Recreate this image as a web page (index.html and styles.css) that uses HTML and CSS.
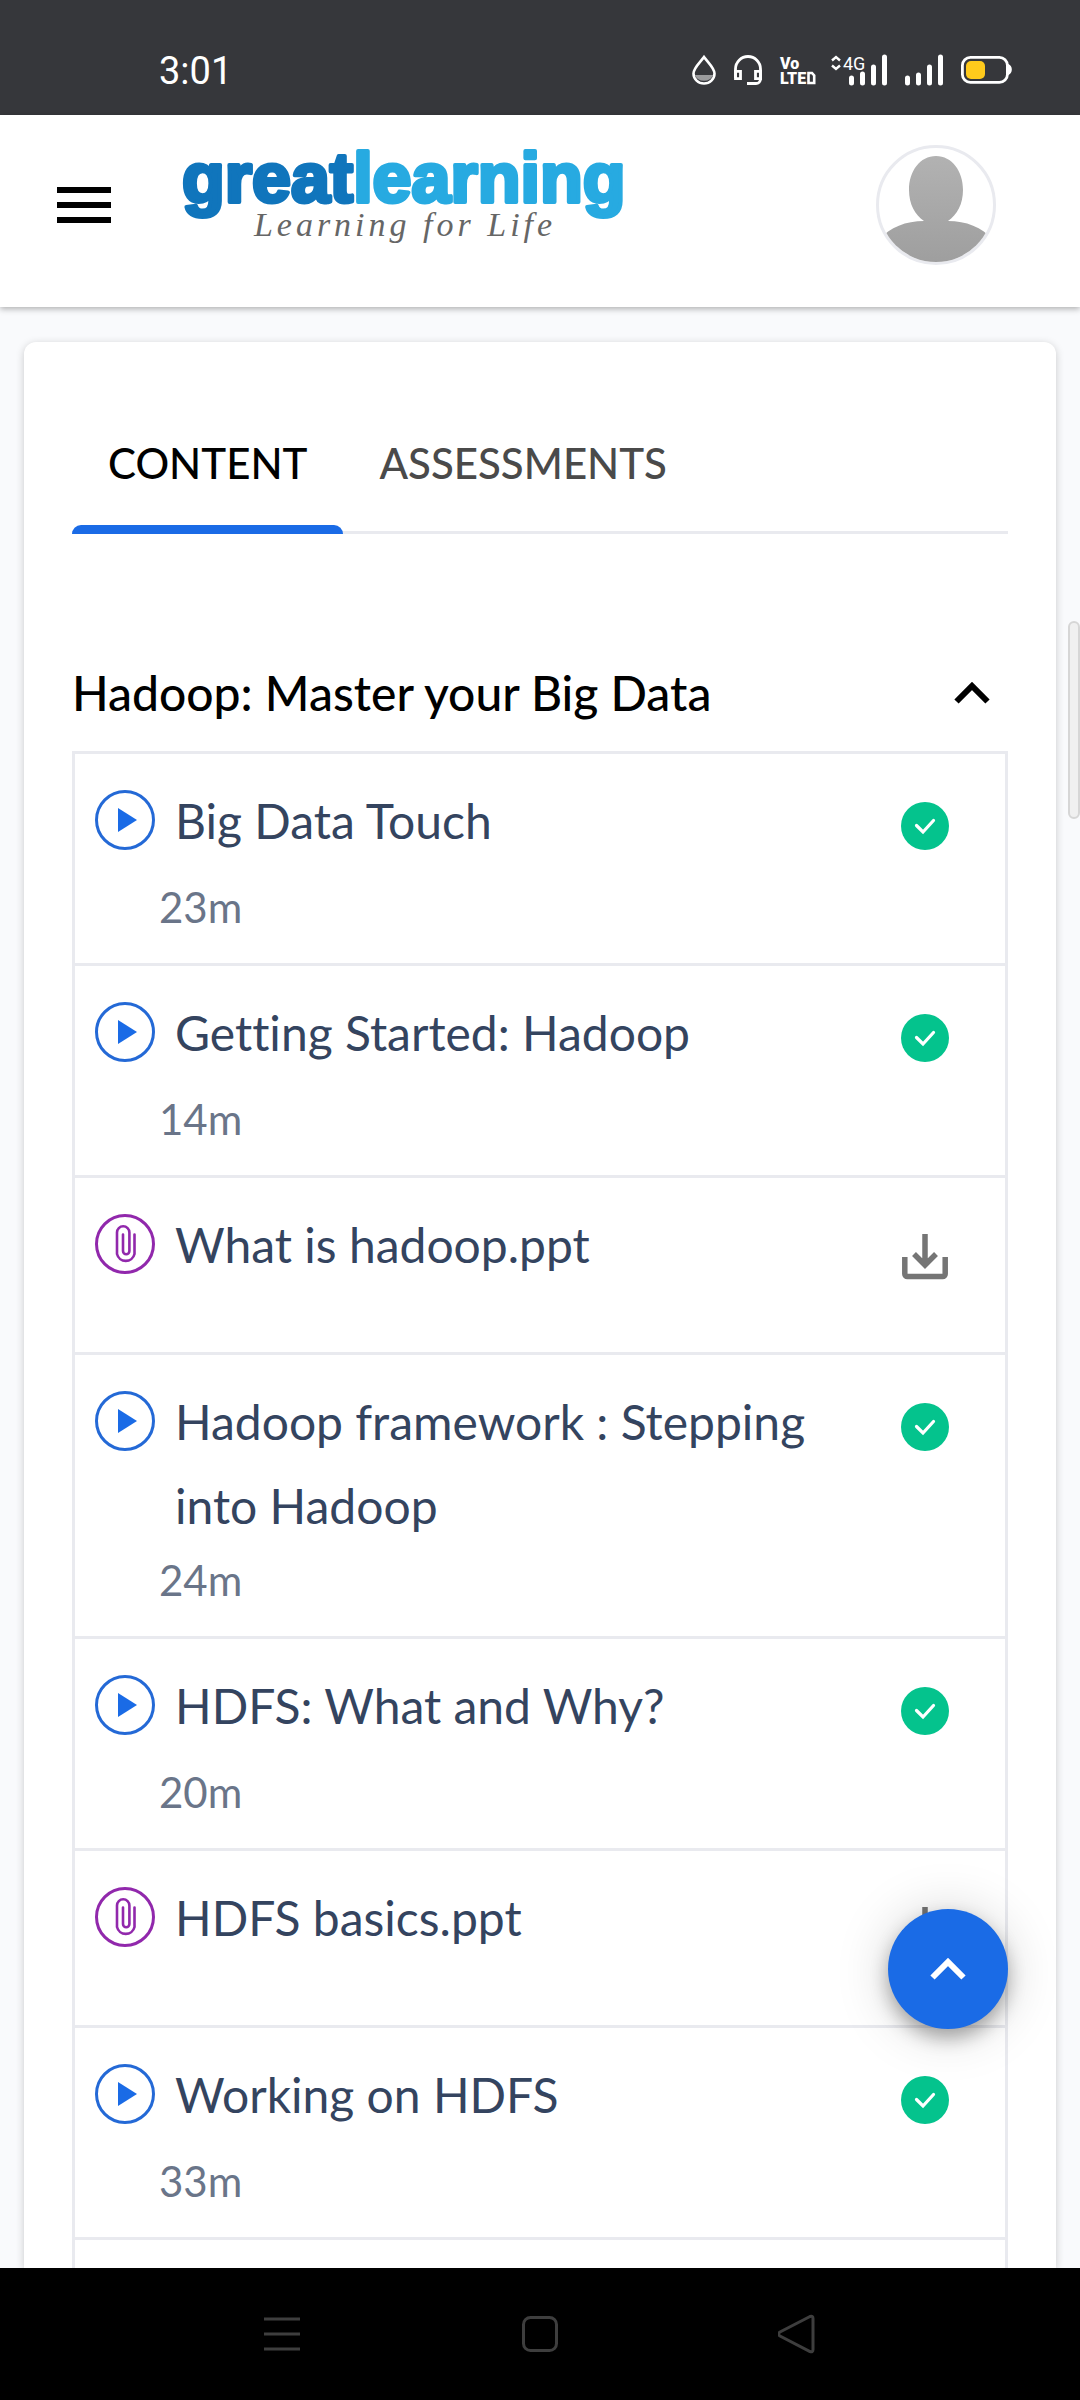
FILE: index.html
```html
<!DOCTYPE html>
<html lang="en">
<head>
<meta charset="utf-8">
<meta name="viewport" content="width=device-width, initial-scale=1">
<title>Great Learning</title>
<link rel="stylesheet" href="styles.css">
</head>
<body>
<svg class="sprite" aria-hidden="true">
  <symbol id="play" viewBox="0 0 60 60">
    <circle cx="30" cy="30" r="28.5" fill="none" stroke="#2469d6" stroke-width="3"/>
    <path d="M23 18v24l19-12z" fill="#1a6be6"/>
  </symbol>
  <symbol id="clip" viewBox="0 0 60 60">
    <g fill="none" stroke="#9128ac" stroke-width="3">
      <circle cx="30" cy="30" r="28.5"/>
      <path stroke-width="2.6" stroke-linecap="round" d="M39.5 20.500v19.500a9 9 0 0 1-17.500 0V18.500a6.200 6.200 0 0 1 12.400 0v18.500a3.200 3.200 0 0 1-6.400 0V20.500"/>
    </g>
  </symbol>
  <symbol id="check" viewBox="0 0 48 48">
    <circle cx="24" cy="24" r="24" fill="#04c38d"/>
    <path d="M15.500 23.500l6.500 6.500L32.500 18.500" fill="none" stroke="#fff" stroke-width="3.200" stroke-linecap="round"/>
  </symbol>
  <symbol id="download" viewBox="0 0 48 48">
    <g fill="none" stroke="#757575" stroke-width="5.500">
      <path d="M3.800 25v17a2.500 2.500 0 0 0 2.500 2.500h35.400a2.500 2.500 0 0 0 2.500-2.500V25"/>
      <path d="M24 2v30M13 22l11 11 11-11"/>
    </g>
  </symbol>
  <symbol id="chevron" viewBox="0 0 36 22">
    <path d="M2.500 19.500L18 4l15.500 15.500" fill="none" stroke="currentColor" stroke-width="6"/>
  </symbol>
</svg>

<div class="screen">
  <div class="status">
    <span class="clock">3:01</span>
    <div class="status-icons">
      <svg width="24" height="30" viewBox="0 0 24 30"><path d="M3 20a9.500 8.500 0 0 0 18 0z" fill="#9b9b9d"/><path d="M12 2C8 7.500 1.500 13 1.500 18.500a10.500 10 0 0 0 21 0C22.500 13 16 7.500 12 2z" fill="none" stroke="#fff" stroke-width="2.600"/></svg>
      <svg width="28" height="30" viewBox="0 0 28 30"><g fill="none" stroke="#fff" stroke-width="2.800"><path d="M1.500 23V14a12.500 12.500 0 0 1 25 0v10a4.500 4.500 0 0 1-4.500 4.500h-9"/><path d="M1.500 16.400h5v7.200h-5zM21.500 16.400h5v7.200h-5z"/></g></svg>
      <svg class="volte" width="33" height="30" viewBox="0 0 33 30"><text x="0" y="14">Vo</text><text x="0" y="29">LTE</text><path d="M28.500 18H32l2.200 2.500v7.500h-5.700z" fill="none" stroke="#fff" stroke-width="2.600"/></svg>
      <svg class="network" width="56" height="30" viewBox="0 0 56 30"><path d="M1 5.500l4-3.500 4 3.500M1 10.500l4 3.500 4-3.500" fill="none" stroke="#fff" stroke-width="2.400"/><text x="12" y="15">4G</text><path d="M20.500 23v5M31.500 19v9M42.500 12v16M53.500 2v26" stroke="#fff" stroke-width="5" stroke-linecap="round"/></svg>
      <svg width="38" height="30" viewBox="0 0 38 30"><path d="M2.500 23v5M13.500 20v8M24.500 12v16M35.500 2v26" stroke="#fff" stroke-width="5" stroke-linecap="round"/></svg>
      <svg width="50" height="30" viewBox="0 0 50 30"><rect x="1.400" y="2.400" width="45" height="25" rx="8" fill="none" stroke="#fff" stroke-width="2.800"/><path d="M47 10a5 5 0 0 1 0 9z" fill="#fff" stroke="#fff" stroke-width="2"/><rect x="5" y="6" width="19" height="18" rx="5" fill="#ffca1c"/></svg>
    </div>
  </div>

  <header class="header">
    <button class="menu" aria-label="Menu"><span></span><span></span><span></span></button>
    <a class="logo" href="#" aria-label="Great Learning home">
      <svg class="wordmark" width="448" height="62" viewBox="0 0 448 62"><text x="1" y="49"><tspan class="dark">great</tspan><tspan class="light">learning</tspan></text></svg>
      <span class="tagline">Learning for Life</span>
    </a>
    <button class="avatar" aria-label="Profile">
      <svg viewBox="0 -2 114 114">
        <defs><linearGradient id="shade" x1="0" y1="0" x2="0" y2="1"><stop offset="0" stop-color="#b2b2b2"/><stop offset="1" stop-color="#9d9d9d"/></linearGradient></defs>
        <path fill="url(#shade)" d="M57 6C73 6 84 21 84 40c0 14-6 25-15 31 18 0 34 6 45 19v30H0V90c11-13 27-19 45-19-9-6-15-17-15-31C30 21 41 6 57 6z"/>
      </svg>
    </button>
  </header>

  <main class="main">
    <section class="card">
      <div class="tabs" role="tablist">
        <button class="tab active" role="tab" aria-selected="true">CONTENT</button>
        <button class="tab" role="tab" aria-selected="false">ASSESSMENTS</button>
      </div>
      <button class="module" aria-expanded="true">
        <span>Hadoop: Master your Big Data</span>
        <svg class="chevron"><use href="#chevron"/></svg>
      </button>
      <ul class="lessons">
        <li class="lesson">
          <svg class="kind"><use href="#play"/></svg>
          <a class="title" href="#">Big Data Touch</a>
          <svg class="state"><use href="#check"/></svg>
          <span class="time">23m</span>
        </li>
        <li class="lesson">
          <svg class="kind"><use href="#play"/></svg>
          <a class="title" href="#">Getting Started: Hadoop</a>
          <svg class="state"><use href="#check"/></svg>
          <span class="time">14m</span>
        </li>
        <li class="lesson file">
          <svg class="kind"><use href="#clip"/></svg>
          <a class="title" href="#">What is hadoop.ppt</a>
          <button class="download" aria-label="Download"><svg><use href="#download"/></svg></button>
        </li>
        <li class="lesson">
          <svg class="kind"><use href="#play"/></svg>
          <a class="title" href="#">Hadoop framework : Stepping into Hadoop</a>
          <svg class="state"><use href="#check"/></svg>
          <span class="time">24m</span>
        </li>
        <li class="lesson">
          <svg class="kind"><use href="#play"/></svg>
          <a class="title" href="#">HDFS: What and Why?</a>
          <svg class="state"><use href="#check"/></svg>
          <span class="time">20m</span>
        </li>
        <li class="lesson file">
          <svg class="kind"><use href="#clip"/></svg>
          <a class="title" href="#">HDFS basics.ppt</a>
          <button class="download" aria-label="Download"><svg><use href="#download"/></svg></button>
        </li>
        <li class="lesson">
          <svg class="kind"><use href="#play"/></svg>
          <a class="title" href="#">Working on HDFS</a>
          <svg class="state"><use href="#check"/></svg>
          <span class="time">33m</span>
        </li>
      </ul>
    </section>
    <div class="scrollbar"></div>
    <button class="to-top" aria-label="Back to top"><svg class="chevron"><use href="#chevron"/></svg></button>
  </main>

  <nav class="system-nav">
    <button aria-label="Recent apps"><svg viewBox="0 0 40 40"><path d="M2 5h36M2 20h36M2 35h36" stroke="#3e3e3e" stroke-width="3"/></svg></button>
    <button aria-label="Home"><svg viewBox="0 0 40 40"><rect x="3.500" y="3.500" width="33" height="33" rx="7" fill="none" stroke="#3e3e3e" stroke-width="3"/></svg></button>
    <button aria-label="Back"><svg viewBox="0 0 40 40"><path d="M32 2.500L2 18q-3 2 0 4l30 15.500q3 1 3-2v-31q0-3-3-2z" fill="none" stroke="#3e3e3e" stroke-width="3"/></svg></button>
  </nav>
</div>
</body>
</html>
```

FILE: styles.css
```css
* { box-sizing: border-box; }

body {
  margin: 0;
  font-family: Lato, sans-serif;
  font-variant-ligatures: none;
  background: #f9fafc;
}

button {
  margin: 0;
  padding: 0;
  border: 0;
  background: none;
  color: inherit;
  font: inherit;
}

a { color: inherit; text-decoration: none; }
svg { display: block; flex: none; }
.sprite { position: absolute; width: 0; height: 0; }

.screen {
  display: flex;
  flex-direction: column;
  height: 100vh;
  overflow: hidden;
}

/* System status bar */
.status {
  flex: none;
  display: flex;
  justify-content: space-between;
  align-items: center;
  height: 115px;
  padding: 24px 69px 0 159px;
  background: #36373b;
  color: #fff;
}
.clock { padding-top: 2px; font: 38px/48px Roboto, sans-serif; }
.status-icons { display: flex; align-items: center; gap: 18px; }
.status-icons svg { overflow: visible; }
.status-icons text { fill: #fff; font-family: Roboto, sans-serif; }
.volte text { font-size: 16px; font-weight: 900; }
.network text { font-size: 18px; }

/* App header */
.header {
  position: relative;
  z-index: 1;
  flex: none;
  display: flex;
  align-items: flex-start;
  height: 192px;
  padding: 30px 84px 0 57px;
  background: #fff;
  box-shadow: 0 2px 6px rgba(0, 0, 0, 0.3);
}
.menu {
  display: flex;
  flex-direction: column;
  gap: 9px;
  width: 54px;
  margin-top: 42px;
}
.menu span { height: 6px; background: #000; }
.logo {
  display: flex;
  flex-direction: column;
  align-items: center;
  margin-left: 70px;
}
.wordmark { overflow: visible; margin-top: 8px; }
.wordmark text {
  font: bold 70px "Liberation Sans", sans-serif;
  stroke-width: 4px;
  stroke-linejoin: round;
}
.dark { fill: #1075bc; stroke: #1075bc; }
.light { fill: #27aae1; stroke: #27aae1; }
.tagline {
  margin-top: -9px;
  color: #666;
  font: italic 34px/38px "Liberation Serif", serif;
  letter-spacing: 4px;
}
.avatar {
  width: 120px;
  height: 120px;
  margin-left: auto;
  overflow: hidden;
  border: 3px solid #e9eaef;
  border-radius: 50%;
}

/* Course content */
.main {
  position: relative;
  flex: 1;
  min-height: 0;
  overflow: hidden;
  padding: 35px 24px 0;
}
.card {
  display: flex;
  flex-direction: column;
  min-height: 100%;
  padding: 72px 48px 0;
  border-radius: 12px 12px 0 0;
  background: #fff;
  box-shadow: 0 2px 9px rgba(0, 0, 0, 0.2);
}
.tabs {
  flex: none;
  display: flex;
  border-bottom: 3px solid #e9eaef;
}
.tab {
  position: relative;
  height: 117px;
  padding: 0 36px 20px;
  color: #4a4a4a;
  font-size: 42px;
  font-weight: 500;
}
.tab.active { color: #000; }
.tab.active::after {
  content: "";
  position: absolute;
  inset: auto 0 -3px;
  height: 9px;
  border-radius: 9px 9px 0 0;
  background: #1a6be6;
}
.module {
  flex: none;
  display: flex;
  justify-content: space-between;
  align-items: center;
  margin-top: 100px;
  padding: 23px 18px 22px 0;
  font-size: 48px;
  font-weight: 500;
  line-height: 72px;
}
.chevron { width: 36px; height: 22px; }

.lessons {
  flex: 1 0 auto;
  margin: 0;
  padding: 0;
  list-style: none;
  border: solid #e9eaef;
  border-width: 3px 3px 0;
}
.lesson {
  display: grid;
  grid-template-columns: 60px 1fr 48px;
  grid-template-rows: minmax(96px, auto) 65px;
  column-gap: 20px;
  align-items: start;
  padding: 25px 56px 23px 20px;
  border-bottom: 3px solid #e9eaef;
}
.lesson.file { grid-template-rows: 126px; }
.kind { width: 60px; height: 60px; margin-top: 11px; }
.title { color: #34445f; font-size: 48px; line-height: 84px; }
.state { width: 48px; height: 48px; margin-top: 23px; }
.download { margin-top: 29px; }
.download svg { width: 48px; height: 48px; }
.time {
  grid-column: 1 / -1;
  padding-left: 64px;
  color: #6a7589;
  font-size: 42px;
  line-height: 65px;
}

.scrollbar {
  position: absolute;
  top: 314px;
  right: 0;
  width: 12px;
  height: 198px;
  border: 2px solid #d6d6d6;
  border-radius: 6px;
  background: #f0f0f0;
}
.to-top {
  position: absolute;
  right: 72px;
  bottom: 239px;
  display: grid;
  place-items: center;
  width: 120px;
  height: 120px;
  border-radius: 50%;
  background: #1a6be6;
  color: #fff;
  box-shadow: 0 9px 18px rgba(0, 0, 0, 0.3), 0 3px 54px rgba(0, 0, 0, 0.18);
}

/* System navigation bar */
.system-nav {
  flex: none;
  display: flex;
  justify-content: center;
  align-items: center;
  gap: 218px;
  height: 132px;
  background: #000;
}
.system-nav svg { width: 40px; height: 40px; }
```
